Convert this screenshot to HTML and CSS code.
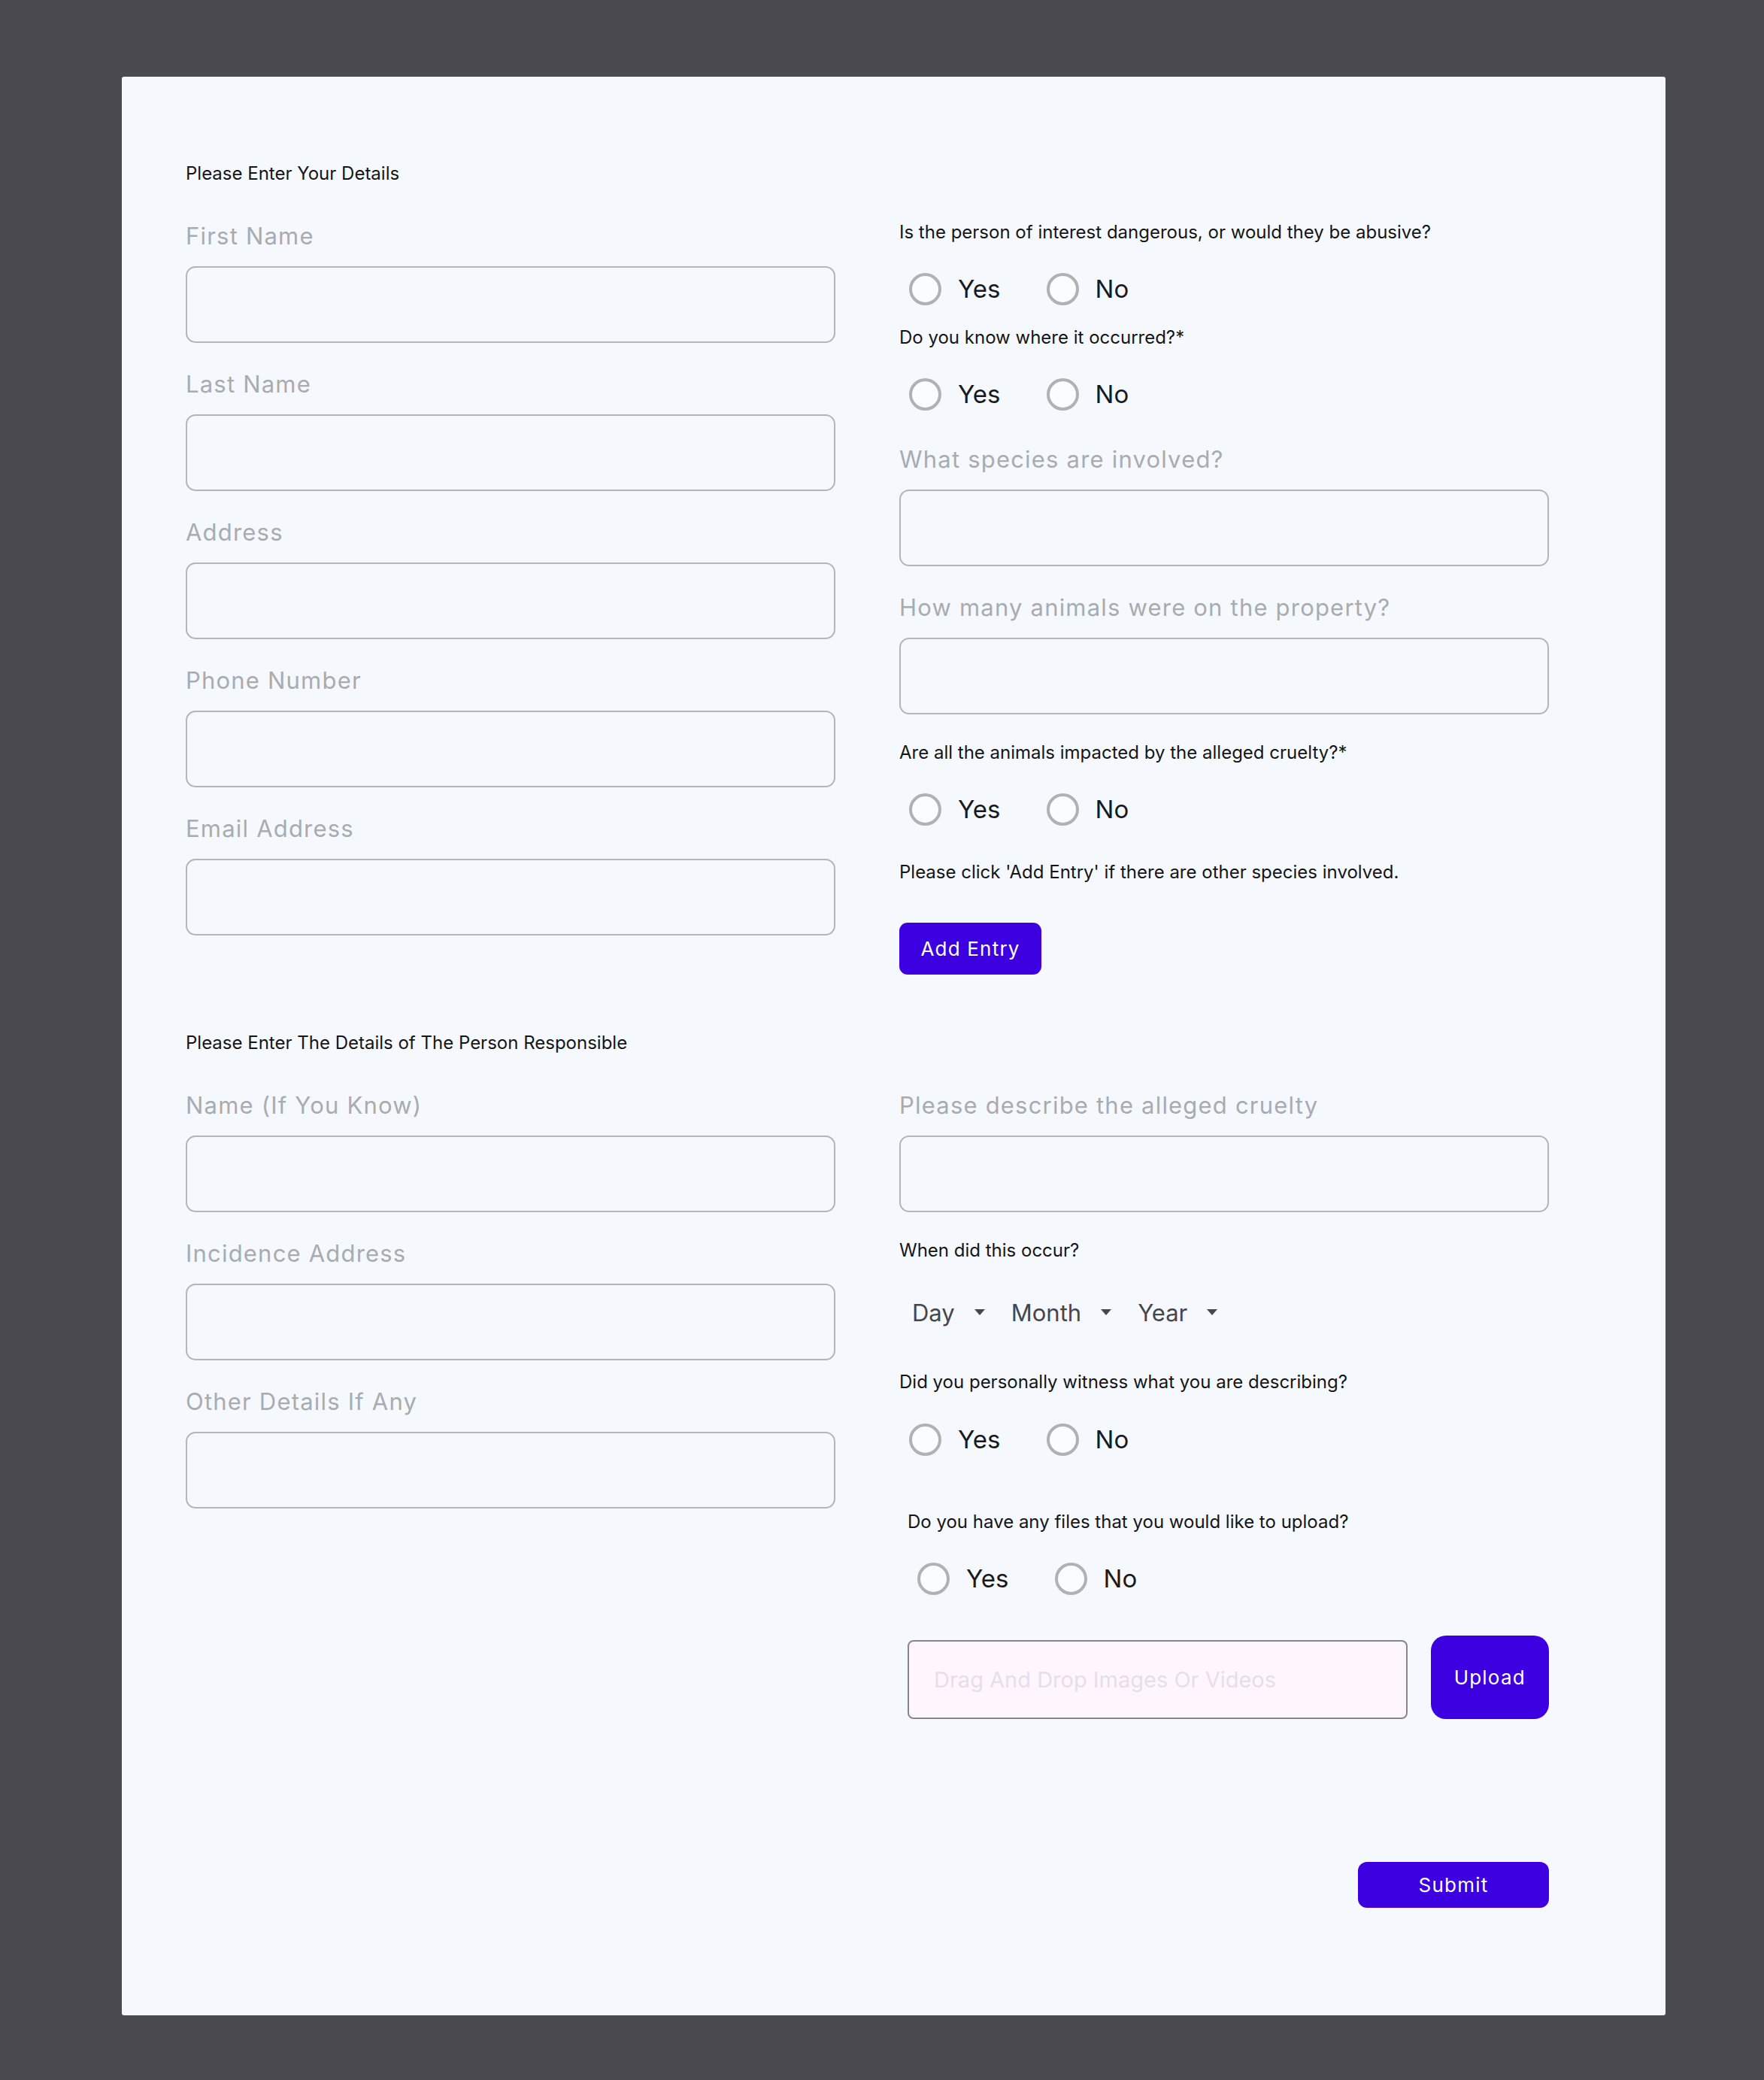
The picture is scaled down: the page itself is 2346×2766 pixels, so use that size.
FILE: index.html
```html
<!DOCTYPE html>
<html lang="en">
<head>
<meta charset="utf-8">
<title>Report Form</title>
<link rel="stylesheet" href="styles.css">
</head>
<body>
<main class="card">
  <section class="section top">
    <h2 class="section-title">Please Enter Your Details</h2>
    <div class="col left">
      <div class="field"><label class="label">First Name</label><div class="input"></div></div>
      <div class="field"><label class="label">Last Name</label><div class="input"></div></div>
      <div class="field"><label class="label">Address</label><div class="input"></div></div>
      <div class="field"><label class="label">Phone Number</label><div class="input"></div></div>
      <div class="field"><label class="label">Email Address</label><div class="input"></div></div>
    </div>
    <div class="col right">
      <p class="question">Is the person of interest dangerous, or would they be abusive?</p>
      <div class="radios q-gap"><span class="radio"><i class="circle"></i>Yes</span><span class="radio"><i class="circle"></i>No</span></div>
      <p class="question after-radio-tight">Do you know where it occurred?*</p>
      <div class="radios q-gap"><span class="radio"><i class="circle"></i>Yes</span><span class="radio"><i class="circle"></i>No</span></div>
      <div class="field after-radio"><label class="label">What species are involved?</label><div class="input"></div></div>
      <div class="field field-next"><label class="label">How many animals were on the property?</label><div class="input"></div></div>
      <p class="question after-input">Are all the animals impacted by the alleged cruelty?*</p>
      <div class="radios q-gap"><span class="radio"><i class="circle"></i>Yes</span><span class="radio"><i class="circle"></i>No</span></div>
      <p class="question after-radio">Please click 'Add Entry' if there are other species involved.</p>
      <button class="btn add-entry">Add Entry</button>
    </div>
  </section>

  <section class="section bottom">
    <h2 class="section-title">Please Enter The Details of The Person Responsible</h2>
    <div class="col left">
      <div class="field"><label class="label">Name (If You Know)</label><div class="input"></div></div>
      <div class="field"><label class="label">Incidence Address</label><div class="input"></div></div>
      <div class="field"><label class="label">Other Details If Any</label><div class="input"></div></div>
    </div>
    <div class="col right">
      <div class="field"><label class="label">Please describe the alleged cruelty</label><div class="input"></div></div>
      <p class="question after-input">When did this occur?</p>
      <div class="date-row">
        <span class="select">Day<i class="caret"></i></span>
        <span class="select">Month<i class="caret"></i></span>
        <span class="select">Year<i class="caret"></i></span>
      </div>
      <p class="question after-date">Did you personally witness what you are describing?</p>
      <div class="radios q-gap"><span class="radio"><i class="circle"></i>Yes</span><span class="radio"><i class="circle"></i>No</span></div>
      <div class="upload-group">
        <p class="question">Do you have any files that you would like to upload?</p>
        <div class="radios q-gap"><span class="radio"><i class="circle"></i>Yes</span><span class="radio"><i class="circle"></i>No</span></div>
        <div class="upload-row">
          <div class="dropzone">Drag And Drop Images Or Videos</div>
          <button class="btn upload">Upload</button>
        </div>
      </div>
      <div class="submit-row"><button class="btn submit">Submit</button></div>
    </div>
  </section>
</main>
</body>
</html>
```

FILE: styles.css
```css
* { box-sizing: border-box; }

html, body {
  margin: 0;
  padding: 0;
}

body {
  background: #4b4a50;
  font-family: "Inter", "Liberation Sans", sans-serif;
  padding: 102px 131px 86px 162px;
}

.card {
  width: 2053px;
  height: 2578px;
  background: #f5f9fe;
  border-radius: 3px;
  padding: 114px 0 0 85px;
}

.section {
  display: grid;
  grid-template-columns: 864px 864px;
  column-gap: 85px;
  row-gap: 48px;
}

.section.bottom { margin-top: 76px; }

.section-title {
  grid-column: 1;
  grid-row: 1;
  margin: 0;
  font-size: 24px;
  line-height: 30px;
  font-weight: 400;
  color: #151515;
}

.col {
  grid-row: 2;
  display: flex;
  flex-direction: column;
}
.col.left { grid-column: 1; gap: 35px; }
.col.right { grid-column: 2; }
.section.top .col.right { margin-top: -2px; }

.field {
  display: flex;
  flex-direction: column;
}

.label {
  font-size: 31px;
  line-height: 40px;
  letter-spacing: 1.2px;
  color: #a8abb0;
  margin-bottom: 20px;
}

.input {
  height: 102px;
  border: 2px solid #b3b5b9;
  border-radius: 13px;
}

.question {
  margin: 0;
  font-size: 24px;
  line-height: 34px;
  color: #151515;
}

.q-gap { margin-top: 37px; }
.section.top .q-gap { margin-top: 36px; }
.after-radio-tight { margin-top: 26px; }
.after-radio { margin-top: 45px; }
.field-next { margin-top: 35px; }
.after-input { margin-top: 34px; }
.after-date { margin-top: 54px; }

.radios {
  display: flex;
  align-items: center;
  height: 44px;
  padding-left: 13px;
  gap: 61px;
}

.radio {
  display: flex;
  align-items: center;
  gap: 22px;
  font-size: 33px;
  color: #1a1a1a;
}

.circle {
  width: 43px;
  height: 43px;
  border: 4px solid #b1b1b4;
  border-radius: 50%;
  background: #fbfcfe;
}

.btn {
  border: none;
  background: #3c00e1;
  color: #ffffff;
  font-family: "Inter", "Liberation Sans", sans-serif;
  font-size: 26px;
  letter-spacing: 1.2px;
  cursor: pointer;
}

.add-entry {
  align-self: flex-start;
  margin-top: 50px;
  width: 189px;
  height: 69px;
  border-radius: 11px;
}

.date-row {
  display: flex;
  align-items: center;
  height: 44px;
  margin-top: 43px;
  padding-left: 17px;
  gap: 35px;
}

.select {
  display: flex;
  align-items: center;
  gap: 26px;
  font-size: 31px;
  color: #47464c;
}

.caret {
  width: 0;
  height: 0;
  border-left: 7px solid transparent;
  border-right: 7px solid transparent;
  border-top: 8px solid #47464c;
}

.upload-group {
  margin-top: 71px;
  padding-left: 11px;
}

.upload-group .radios { margin-top: 36px; }

.upload-row {
  display: flex;
  align-items: flex-end;
  gap: 31px;
  margin-top: 54px;
}

.dropzone {
  width: 667px;
  height: 105px;
  background: #fff6fd;
  border: 2px solid #87868b;
  border-radius: 8px;
  padding-left: 33px;
  display: flex;
  align-items: center;
  font-size: 29px;
  color: #e5dfea;
}

.upload {
  width: 158px;
  height: 111px;
  border-radius: 20px;
}

.submit-row {
  display: flex;
  justify-content: flex-end;
  margin-top: 190px;
}

.submit {
  width: 254px;
  height: 61px;
  border-radius: 12px;
}
```
